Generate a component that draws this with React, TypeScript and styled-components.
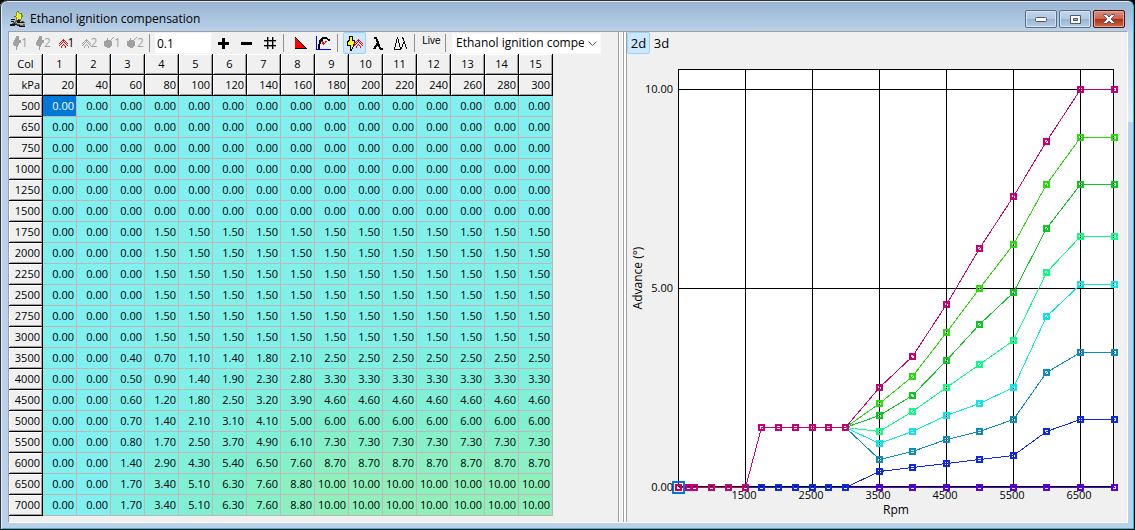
import React, { useLayoutEffect, useRef, useState } from "react";
import styled, { createGlobalStyle, css } from "styled-components";

const GlobalStyle = createGlobalStyle`
  * { box-sizing: border-box; }
  body { margin: 0; background: #000; color: #000; font: 11px/16px "Open Sans", "Noto Sans", sans-serif; }
  button, input, select { font: inherit; color: inherit; }
`;

/* ---------- data ---------- */

const kpa = [20, 40, 60, 80, 100, 120, 140, 160, 180, 200, 220, 240, 260, 280, 300];
const flat = [0, 0, 0, 0, 0, 0, 0, 0, 0];
const low = [0, 0, 0, 1.5, 1.5, 1.5, 1.5, 1.5, 1.5];

/* Nine distinct columns per row; everything above 180 kPa repeats the ninth. */
const baseRows: [number, number[]][] = [
  [500, flat],
  [650, flat],
  [750, flat],
  [1000, flat],
  [1250, flat],
  [1500, flat],
  [1750, low],
  [2000, low],
  [2250, low],
  [2500, low],
  [2750, low],
  [3000, low],
  [3500, [0, 0, 0.4, 0.7, 1.1, 1.4, 1.8, 2.1, 2.5]],
  [4000, [0, 0, 0.5, 0.9, 1.4, 1.9, 2.3, 2.8, 3.3]],
  [4500, [0, 0, 0.6, 1.2, 1.8, 2.5, 3.2, 3.9, 4.6]],
  [5000, [0, 0, 0.7, 1.4, 2.1, 3.1, 4.1, 5, 6]],
  [5500, [0, 0, 0.8, 1.7, 2.5, 3.7, 4.9, 6.1, 7.3]],
  [6000, [0, 0, 1.4, 2.9, 4.3, 5.4, 6.5, 7.6, 8.7]],
  [6500, [0, 0, 1.7, 3.4, 5.1, 6.3, 7.6, 8.8, 10]],
  [7000, [0, 0, 1.7, 3.4, 5.1, 6.3, 7.6, 8.8, 10]],
];
const rows = baseRows.map(([rpm, v]) => ({ rpm, values: kpa.map((_, i) => v[Math.min(i, 8)]) }));

const seriesColors = ["#5a00e6", "#0a28e6", "#0a8cbe", "#0ae6e6", "#0aff82", "#0ac81e", "#28dc0a", "#c80078"];

const mix = (a: number, b: number, t: number) => Math.round(a + (b - a) * t);
const heat = (v: number) => {
  const r = v < 6 ? 128 : mix(128, 144, (v - 6) / 4);
  return `rgb(${r}, 240, ${mix(240, 188, v / 10)})`;
};

/* ---------- window ---------- */

const Window = styled.div`
  display: flex;
  flex-direction: column;
  min-height: 100vh;
  padding: 0 6px 6px 8px;
  border: 1px solid #000;
  border-left-width: 0;
  border-top-color: #2c333c;
  border-radius: 7px 7px 0 0;
  background:
    linear-gradient(#98b4d1, #b9d1ea) top / 100% 30px no-repeat,
    linear-gradient(#bcd4ec, #dfebf8) right 30px / 7px 91px no-repeat,
    #b9d1ea;
  box-shadow: inset 1px 0 #30353c, inset 2px 0 #e4eef8, inset -1px -1px #14c3e0, inset 0 1px #dce8f4;
`;

const TitleBar = styled.header`
  display: flex;
  align-items: center;
  gap: 4px;
  height: 30px;
  flex: none;
  padding: 6px 3px 0 2px;
`;

const Title = styled.h1`
  flex: 1;
  margin: 0;
  font-size: 12px;
  line-height: 16px;
  font-weight: 400;
`;

const Caption = styled.div`
  display: flex;
  gap: 2px;
`;

const CaptionButton = styled.button<{ $close?: boolean }>`
  display: grid;
  place-items: center;
  width: 32px;
  height: 18px;
  padding: 0;
  border: 1px solid ${(p) => (p.$close ? "#43141a" : "#586f8c")};
  border-radius: 2px;
  box-shadow: inset 0 0 0 1px ${(p) => (p.$close ? "#e3a595" : "#d3e3f3")};
  background: ${(p) =>
    p.$close
      ? "linear-gradient(#d9917f 0, #cb6450 48%, #b02c12 52%, #cf6a48 100%)"
      : "linear-gradient(#c3d5e8 0, #b3c9e0 48%, #98b4d2 52%, #b5cee6 100%)"};
`;

const Client = styled.main`
  display: flex;
  flex: 1;
  border: 1px solid #a0a0a0;
  border-right-color: #fff;
  border-bottom-color: #fff;
  background: #f0f0f0;
`;

const TablePane = styled.section`
  flex: none;
  width: 610px;
  border-right: 1px solid #a0a0a0;
`;

const Splitter = styled.div`
  width: 8px;
  flex: none;
  background: linear-gradient(90deg, #fff 0 1px, #f0f0f0 1px 3px, #fff 3px 4px, #a0a0a0 4px 5px, #fff 5px 7px, #a0a0a0 7px 8px);
`;

const ChartPane = styled.section`
  display: flex;
  flex-direction: column;
  flex: 1;
  min-width: 0;
`;

/* ---------- toolbar ---------- */

const Toolbar = styled.div`
  display: flex;
  align-items: center;
  height: 22px;
`;

const ToolButton = styled.button<{ $active?: boolean; $muted?: boolean }>`
  display: flex;
  align-items: center;
  justify-content: center;
  width: 23px;
  height: 22px;
  padding: 0;
  border: 1px solid transparent;
  border-radius: 2px;
  background: none;
  color: ${(p) => (p.$muted ? "#a0a0a0" : "#000")};
  font-size: 12px;
  ${(p) =>
    p.$active &&
    css`
      background: #cce8ff;
      border-color: #99d1ff;
    `}
`;

const ViewButton = styled(ToolButton)`
  font-size: 13px;
`;

const LiveButton = styled(ToolButton)`
  align-items: flex-start;
  font: 400 10px/16px "Liberation Sans", sans-serif;
`;

const Separator = styled.span`
  width: 8px;
  height: 18px;
  flex: none;
  background: linear-gradient(#909090, #909090) 2px 0 / 1px 100% no-repeat;
`;

const StepInput = styled.input`
  width: 56px;
  height: 20px;
  margin-right: 1px;
  padding: 0 2px;
  border: 0;
  background: #fff;
  font-size: 12px;
`;

const MapPicker = styled.div`
  position: relative;
  display: flex;
  width: 149px;
  margin-left: 1px;
  background: #fff;

  svg {
    position: absolute;
    right: 4px;
    top: 8px;
    pointer-events: none;
  }
`;

const MapSelect = styled.select`
  appearance: none;
  width: 100%;
  height: 21px;
  padding: 0 16px 0 3px;
  border: 1px solid #f8f8f8;
  border-radius: 0;
  background: none;
  font-size: 12px;
  text-overflow: clip;
`;

/* ---------- table ---------- */

const Grid = styled.table`
  table-layout: fixed;
  width: 544px;
  border-collapse: separate;
  border-spacing: 0;
  text-align: right;
`;

const HeadCell = styled.th<{ $center?: boolean }>`
  height: 21px;
  padding: 0 2px;
  border: solid #000;
  border-width: 0 1px 1px 0;
  background: #f0f0f0;
  box-shadow: inset 1px 1px #fff, inset -1px -1px #a0a0a0;
  font-weight: 400;
  text-align: ${(p) => (p.$center ? "center" : "right")};
`;

const Cell = styled.td<{ $fill: string; $selected: boolean }>`
  height: 21px;
  padding: 0 2px;
  border: solid #c0b8b8;
  border-width: 0 1px 1px 0;
  background: ${(p) => (p.$selected ? "#0078d7" : p.$fill)};
  color: ${(p) => (p.$selected ? "#fff" : "#000")};
  cursor: default;
`;

/* ---------- chart ---------- */

const ChartArea = styled.div`
  flex: 1;
  min-height: 300px;
  position: relative;
`;

const ChartSvg = styled.svg`
  position: absolute;
  inset: 0;
  width: 100%;
  height: 100%;

  text {
    font-size: 11px;
  }
  .axis {
    font-size: 12px;
  }
`;

const margin = { left: 51, right: 13, top: 15, bottom: 35 };

function Chart({ selected }: { selected: { row: number; col: number } }) {
  const ref = useRef<HTMLDivElement>(null);
  const [size, setSize] = useState({ w: 500, h: 470 });

  useLayoutEffect(() => {
    const el = ref.current;
    if (!el) return;
    const measure = () => setSize({ w: el.clientWidth, h: el.clientHeight });
    measure();
    const observer = new ResizeObserver(measure);
    observer.observe(el);
    return () => observer.disconnect();
  }, []);

  const right = size.w - margin.right;
  const bottom = size.h - margin.bottom;
  const x = (rpm: number) => Math.floor(margin.left + ((rpm - 500) / 6500) * (right - margin.left));
  const y = (v: number) => Math.round(bottom - (v / 10.5) * (bottom - margin.top));
  const xTicks = [1500, 2500, 3500, 4500, 5500, 6500];
  const series = seriesColors.map((color, i) => ({ color, col: i + 1 }));
  const sel = rows[selected.row];

  return (
    <ChartArea ref={ref}>
      <ChartSvg role="img" aria-label="Advance by rpm">
        <g shapeRendering="crispEdges">
          <rect x={margin.left + 0.5} y={margin.top + 0.5} width={Math.max(0, right - margin.left - 1)} height={Math.max(0, bottom - margin.top - 1)} fill="#fff" stroke="#000" />
          {xTicks.map((t) => (
            <rect key={t} x={x(t)} y={margin.top} width={1} height={bottom - margin.top} />
          ))}
          {[5, 10].map((t) => (
            <rect key={t} x={margin.left} y={y(t)} width={right - margin.left} height={1} />
          ))}
          {series.map(({ color, col }) => (
            <g key={col} stroke={color} fill="none">
              <polyline points={rows.map((r) => `${x(r.rpm) + 0.5},${y(r.values[col]) + 0.5}`).join(" ")} />
              {rows.map((r) => (
                <rect key={r.rpm} x={x(r.rpm) - 2} y={y(r.values[col]) - 2} width={5} height={5} strokeWidth={2} />
              ))}
            </g>
          ))}
          <rect x={x(sel.rpm) - 5} y={y(sel.values[selected.col]) - 5} width={11} height={11} fill="none" stroke="#0078d7" strokeWidth={2} />
        </g>
        {xTicks.map((t) => (
          <text key={t} x={x(t) - 1} y={bottom + 12} textAnchor="middle">{t}</text>
        ))}
        {[0, 5, 10].map((t) => (
          <text key={t} x={margin.left - 5} y={y(t) + 4} textAnchor="end">{t.toFixed(2)}</text>
        ))}
        <text className="axis" x={(margin.left + right) / 2} y={bottom + 27} textAnchor="middle">Rpm</text>
        <text className="axis" transform={`translate(15 ${(margin.top + bottom) / 2}) rotate(-90)`} textAnchor="middle">Advance (°)</text>
      </ChartSvg>
    </ChartArea>
  );
}

/* ---------- icons ---------- */

/* Turns rows of "#" and "." into one path of unit squares. */
const dots = (art: string[], ox = 0, oy = 0) =>
  art
    .flatMap((line, r) => [...line].map((ch, c) => (ch === "#" ? `M${c + ox} ${r + oy}h1v1h-1z` : "")))
    .join("");

const caretArt = [
  "....#....",
  "...###...",
  "..#.#.#..",
  ".#.#.#.#.",
  "#.#...#.#",
  ".#..#..#.",
  "#..#.#..#",
  "..#...#..",
  "..#...#..",
];

const Bolt = () => (
  <svg width="8" height="14" viewBox="0 0 8 14" fill="currentColor" shapeRendering="crispEdges">
    <path d="M3 0h3v4h2v3h-2v2h-1v2h-1v3h-1v-4h-2v-1h-1v-3h1v-2h1v-2h1z" />
  </svg>
);
const Carets = ({ color = "currentColor" }: { color?: string }) => (
  <svg width="9" height="9" viewBox="0 0 9 9" shapeRendering="crispEdges">
    <path d={dots(caretArt)} fill={color} />
  </svg>
);
const Bomb = () => (
  <svg width="10" height="12" viewBox="0 0 10 12" fill="currentColor" shapeRendering="crispEdges">
    <path d="M2 3h5v1h1v5h-1v1h-1v1h-3v-1h-2v-1h-1v-5h2zM3 1h1v2h-1zM7 2h1v1h-1zM8 1h1v1h-1zM9 0h1v1h-1z" />
  </svg>
);
const Plus = () => (
  <svg width="11" height="11" viewBox="0 0 11 11" shapeRendering="crispEdges"><path d="M4 0h3v4h4v3h-4v4h-3v-4h-4v-3h4z" /></svg>
);
const Minus = () => (
  <svg width="11" height="11" viewBox="0 0 11 11" shapeRendering="crispEdges"><path d="M0 4h11v3h-11z" /></svg>
);
const Hash = () => (
  <svg width="12" height="12" viewBox="0 0 12 12" shapeRendering="crispEdges">
    <path d="M3 0h1v12h-1zM8 0h1v12h-1zM0 3h12v1h-12zM0 8h12v1h-12z" />
    <path d="M4 0h1v12h-1zM9 0h1v12h-1zM0 4h12v1h-12zM0 9h12v1h-12z" opacity=".4" />
  </svg>
);
const Ramp = () => (
  <svg width="14" height="14" viewBox="0 0 14 14" shapeRendering="crispEdges">
    <path d="M1 1v12h12z" fill="#f00" /><path d="M1.500 1.500l11 11" fill="none" stroke="#000" />
    <path d="M1 12h12v1h-12z" />
  </svg>
);
const Curve = () => (
  <svg width="15" height="14" viewBox="0 0 15 14" shapeRendering="crispEdges">
    <path d="M0 0h1v13h14v1h-15z" fill="#00f" />
    <path d="M2 8h2v5h-2zM3 4h2v4h-2zM4 3h3v2h-3zM5 2h7v1h-7zM6 1h5v1h-5zM11 3h2v1h-2zM12 3h2v2h-2z" fill="#000" />
    <path d="M5 5h2v1h-2zM6 6h2v1h-2zM9 6h1v1h-1zM6 7h3v1h-3zM7 8h1v1h-1zM9 5h2v1h-2zM8 7h1v1h-1z" fill="#f00" />
  </svg>
);
const Spark = () => (
  <svg width="16" height="15" viewBox="0 0 16 15" shapeRendering="crispEdges">
    <path d="M2.500 .5h3v4h2v3l-3 6.500h-1v-5h-3v-3l2-2z" fill="#ff0" stroke="#000" />
    <path d={dots(caretArt, 7, 3)} fill="#f00" />
  </svg>
);
const Lambda = () => (
  <svg width="10" height="13" viewBox="0 0 10 13" fill="none" stroke="#000" strokeWidth="2" shapeRendering="crispEdges">
    <path d="M1 1h2l1 2l3 8l1 1h2M5 6l-4 6" />
  </svg>
);
const DeltaLambda = () => (
  <svg width="14" height="14" viewBox="0 0 14 14" fill="none" stroke="#000" shapeRendering="crispEdges">
    <path d="M3.500 1l-3 12h6zM7.500 1.500h1l1 2l3 9l1 1M10 6l-3 7" />
  </svg>
);
const Chevron = () => (
  <svg width="9" height="6" viewBox="0 0 9 6" fill="none" stroke="#555"><path d="M.5 .5l4 4l4-4" /></svg>
);
const AppIcon = () => (
  <svg width="16" height="16" viewBox="0 0 16 16" shapeRendering="crispEdges">
    <path d="M5 9l3-1l7 3v4h-4l-7-2l-4 2v-2l3-1z" fill="#5d6063" />
    <path d="M2 9h4l-1 2h-3zM9 10l6 2v1l-4 1l-6-2z" fill="#b4b49c" />
    <path d="M1 8h4v1h-4zM0 13h5v2h-5zM1 10h3v1h-3zM4 12l7 3h4v1h-5l-6-3zM7 9h3v2h4v1h-7z" fill="#151515" />
    <path d="M8 0l1 2h3l-1 2l2 1l-2 1v2h-2l-3 2l1-3l-3-2h2v-3z" fill="#f4f01c" stroke="#3a3a10" strokeWidth=".5" />
  </svg>
);

/* ---------- page ---------- */

export default function App() {
  const [selected, setSelected] = useState({ row: 0, col: 0 });
  const [step, setStep] = useState("0.1");
  const [view, setView] = useState<"2d" | "3d">("2d");

  return (
    <>
      <GlobalStyle />
      <Window>
        <TitleBar>
          <AppIcon />
          <Title>Ethanol ignition compensation</Title>
          <Caption>
            <CaptionButton aria-label="Minimize">
              <svg width="12" height="6" viewBox="0 0 12 6"><rect x=".5" y="1.500" width="11" height="4" rx="1" fill="#fff" stroke="#535666" /></svg>
            </CaptionButton>
            <CaptionButton aria-label="Maximize">
              <svg width="11" height="9" viewBox="0 0 11 9"><path d="M.5 .5h10v8h-10zM3.500 3.500v2h4v-2z" fill="#fff" fillRule="evenodd" stroke="#535666" /></svg>
            </CaptionButton>
            <CaptionButton aria-label="Close" $close>
              <svg width="12" height="10" viewBox="0 0 12 10"><path d="M.5 .5h3l2.500 2.500l2.500-2.500h3v1l-3.500 3.500l3.500 3.500v1h-3l-2.500-2.500l-2.500 2.500h-3v-1l3.500-3.500l-3.500-3.500z" fill="#fff" stroke="#535666" /></svg>
            </CaptionButton>
          </Caption>
        </TitleBar>
        <Client>
          <TablePane>
            <Toolbar>
              <ToolButton $muted aria-label="Ignition 1"><Bolt />1</ToolButton>
              <ToolButton $muted aria-label="Ignition 2"><Bolt />2</ToolButton>
              <ToolButton aria-label="Advance 1"><Carets color="#f00" />1</ToolButton>
              <ToolButton $muted aria-label="Advance 2"><Carets />2</ToolButton>
              <ToolButton $muted aria-label="Knock 1"><Bomb />1</ToolButton>
              <ToolButton $muted aria-label="Knock 2"><Bomb />2</ToolButton>
              <Separator />
              <StepInput aria-label="Step" value={step} onChange={(e) => setStep(e.target.value)} />
              <ToolButton aria-label="Increase"><Plus /></ToolButton>
              <ToolButton aria-label="Decrease"><Minus /></ToolButton>
              <ToolButton aria-label="Set value"><Hash /></ToolButton>
              <Separator />
              <ToolButton aria-label="Interpolate"><Ramp /></ToolButton>
              <ToolButton aria-label="Smooth"><Curve /></ToolButton>
              <Separator />
              <ToolButton $active aria-label="Ignition map"><Spark /></ToolButton>
              <ToolButton aria-label="Lambda"><Lambda /></ToolButton>
              <ToolButton aria-label="Lambda difference"><DeltaLambda /></ToolButton>
              <Separator />
              <LiveButton>Live</LiveButton>
              <Separator />
              <MapPicker>
                <MapSelect aria-label="Map"><option>Ethanol ignition compensation</option></MapSelect>
                <Chevron />
              </MapPicker>
            </Toolbar>
            <Grid>
              <thead>
                <tr>
                  <HeadCell $center scope="row">Col</HeadCell>
                  {kpa.map((k, i) => <HeadCell key={k} $center scope="col">{i + 1}</HeadCell>)}
                </tr>
                <tr>
                  <HeadCell scope="row">kPa</HeadCell>
                  {kpa.map((k) => <HeadCell key={k} scope="col">{k}</HeadCell>)}
                </tr>
              </thead>
              <tbody>
                {rows.map((r, row) => (
                  <tr key={r.rpm}>
                    <HeadCell scope="row">{r.rpm}</HeadCell>
                    {r.values.map((v, col) => (
                      <Cell
                        key={kpa[col]}
                        $fill={heat(v)}
                        $selected={row === selected.row && col === selected.col}
                        onClick={() => setSelected({ row, col })}
                      >
                        {v.toFixed(2)}
                      </Cell>
                    ))}
                  </tr>
                ))}
              </tbody>
            </Grid>
          </TablePane>
          <Splitter />
          <ChartPane>
            <Toolbar>
              <ViewButton $active={view === "2d"} onClick={() => setView("2d")}>2d</ViewButton>
              <ViewButton $active={view === "3d"} onClick={() => setView("3d")}>3d</ViewButton>
            </Toolbar>
            <Chart selected={selected} />
          </ChartPane>
        </Client>
      </Window>
    </>
  );
}
